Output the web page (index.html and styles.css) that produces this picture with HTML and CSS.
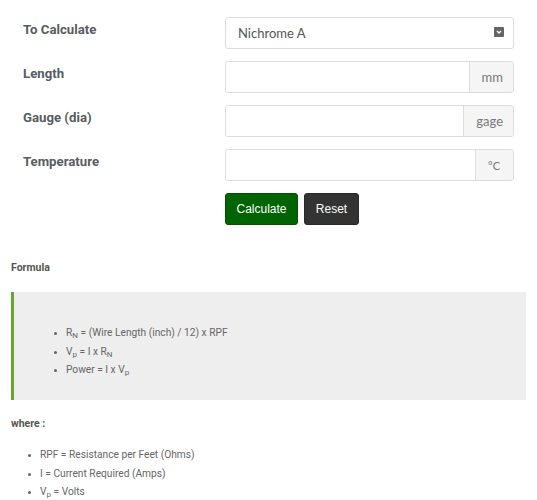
FILE: index.html
```html
<!DOCTYPE html>
<html>
<head>
<meta charset="utf-8">
<link rel="stylesheet" href="styles.css">
</head>
<body>
<div class="page">
  <form class="calc">
    <div class="row">
      <label class="lbl">To Calculate</label>
      <div class="field">
        <div class="select">
          <span>Nichrome A</span>
          <span class="arrow"><svg width="10" height="10" viewBox="0 0 10 10"><path d="M3 4 L5 6 L7 4" fill="none" stroke="#fff" stroke-width="1.4"/></svg></span>
        </div>
      </div>
    </div>
    <div class="row">
      <label class="lbl">Length</label>
      <div class="field group">
        <div class="input"></div>
        <span class="addon">mm</span>
      </div>
    </div>
    <div class="row">
      <label class="lbl">Gauge (dia)</label>
      <div class="field group">
        <div class="input"></div>
        <span class="addon">gage</span>
      </div>
    </div>
    <div class="row">
      <label class="lbl">Temperature</label>
      <div class="field group">
        <div class="input"></div>
        <span class="addon small">°C</span>
      </div>
    </div>
    <div class="row btnrow">
      <span class="lbl"></span>
      <div class="field buttons">
        <button type="button" class="btn calc-btn">Calculate</button>
        <button type="button" class="btn reset-btn">Reset</button>
      </div>
    </div>
  </form>

  <h4 class="heading">Formula</h4>
  <blockquote class="quote">
    <ul class="list">
      <li>R<sub>N</sub> = (Wire Length (inch) / 12) x RPF</li>
      <li>V<sub>p</sub> = I x R<sub>N</sub></li>
      <li>Power = I x V<sub>p</sub></li>
    </ul>
  </blockquote>

  <h4 class="heading where">where :</h4>
  <ul class="list plain">
    <li>RPF = Resistance per Feet (Ohms)</li>
    <li>I = Current Required (Amps)</li>
    <li>V<sub>p</sub> = Volts</li>
  </ul>
</div>
</body>
</html>
```

FILE: styles.css
```css
html, body {
  margin: 0;
  padding: 0;
  background: #fff;
}
body {
  font-family: Roboto, "Liberation Sans", sans-serif;
  color: #666;
}
.page {
  padding: 17px 11px 0 11px;
  width: 515px;
}
.calc {
  display: flex;
  flex-direction: column;
  gap: 12px;
}
.row {
  display: grid;
  grid-template-columns: 214px 289px;
  align-items: start;
}
.lbl {
  padding-left: 12px;
  padding-top: 5px;
  font-size: 13.2px;
  font-weight: 700;
  color: #575c63;
  line-height: 16px;
}
.field {
  height: 32px;
  box-sizing: border-box;
}
.select {
  height: 32px;
  box-sizing: border-box;
  border: 1px solid #ddd;
  border-radius: 3px;
  display: flex;
  align-items: center;
  justify-content: space-between;
  padding: 0 9px 0 12px;
  font-family: Lato, "Liberation Sans", sans-serif;
  font-size: 13px;
  color: #555;
}
.arrow {
  width: 10px;
  height: 10px;
  background: #666;
  border-radius: 1px;
  display: flex;
  margin-top: -3px;
}
.group {
  display: flex;
  border: 1px solid #ddd;
  border-radius: 3px;
  overflow: hidden;
}
.input {
  flex: 1;
  background: #fff;
}
.addon {
  background: #f5f5f5;
  border-left: 1px solid #ddd;
  padding: 0 10px 0 12px;
  display: flex;
  align-items: center;
  font-family: Lato, "Liberation Sans", sans-serif;
  font-size: 13px;
  color: #777;
}
.addon.small {
  font-size: 11px;
  padding: 0 13px 0 12px;
}
.btnrow .field {
  height: 32px;
  display: flex;
  gap: 6px;
}
.btn {
  height: 32px;
  border: 1px solid transparent;
  border-radius: 3px;
  font-family: Arial, "Liberation Sans", sans-serif;
  font-size: 12px;
  color: #fff;
  padding: 0;
  cursor: pointer;
}
.calc-btn {
  background: #006400;
  border-color: #005200;
  width: 73px;
}
.reset-btn {
  background: #333;
  border-color: #2a2a2a;
  width: 55px;
}
.heading {
  margin: 0;
  font-size: 10.5px;
  font-weight: 700;
  color: #555;
  line-height: 12px;
}
.calc + .heading {
  margin-top: 37px;
}
.quote {
  margin: 18px 0 0 0;
  height: 108px;
  box-sizing: border-box;
  background: #eee;
  border-left: 3px solid #6aa434;
  padding: 32px 0 0 40px;
}
.list {
  margin: 0;
  padding: 0 0 0 12px;
  font-size: 10.2px;
  line-height: 18.5px;
  color: #666;
}
.list li::marker {
  font-size: 9px;
  color: #666;
}
sub {
  font-size: 8px;
  line-height: 0;
  vertical-align: -2px;
}
.where {
  margin-top: 18px;
}
.plain {
  margin-top: 16px;
  padding-left: 29px;
}
```
